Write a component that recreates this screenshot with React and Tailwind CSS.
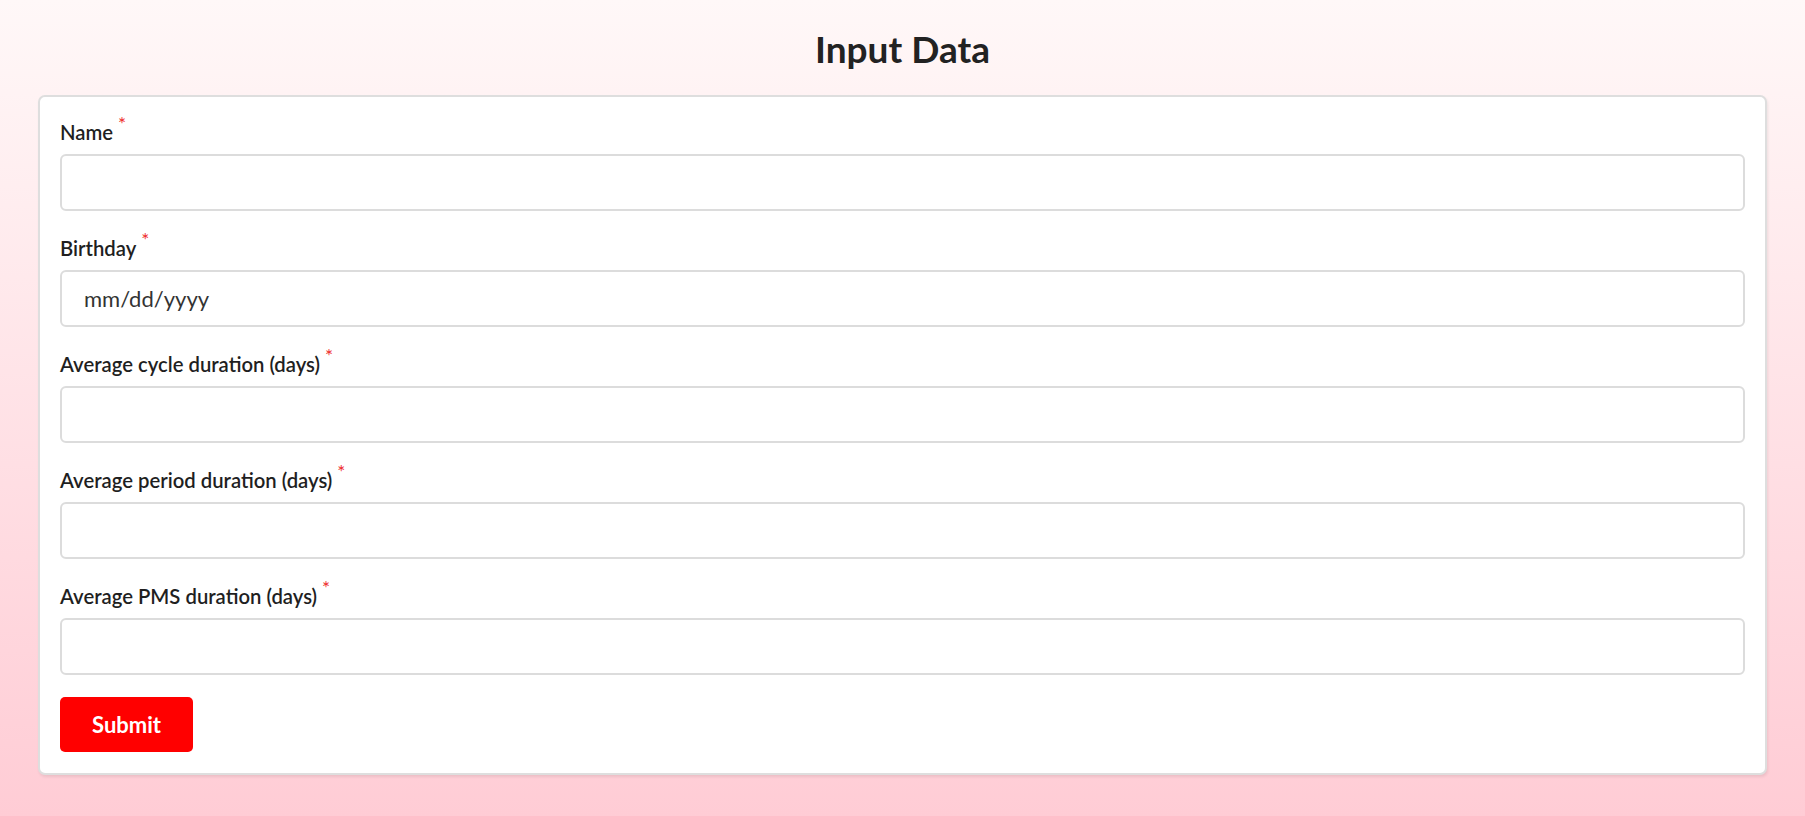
import React from "react";

const fields = [
  { label: "Name", placeholder: "" },
  { label: "Birthday", placeholder: "mm/dd/yyyy" },
  { label: "Average cycle duration (days)", placeholder: "" },
  { label: "Average period duration (days)", placeholder: "" },
  { label: "Average PMS duration (days)", placeholder: "" },
];

export default function App() {
  return (
    <div
      className="min-h-[816px] w-full bg-gradient-to-b from-[#fff8f8] to-[#ffccd5] px-[38px] pt-[27px] pb-[40px] text-[#222]"
      style={{ fontFamily: "Lato, 'Open Sans', sans-serif" }}
    >
      <h1 className="mb-[25px] text-center text-[37px] font-bold leading-[43px] text-[#222]">
        Input Data
      </h1>
      <form
        className="rounded-[7px] border-2 border-[#dedede] bg-white px-5 pt-[23px] pb-[21px] shadow-[1px_2px_3px_rgba(0,0,0,0.08)]"
        onSubmit={(e) => e.preventDefault()}
      >
        {fields.map((f) => (
          <div key={f.label} className="mb-[25px] flex flex-col">
            <label className="mb-[10px] text-[20.3px] font-semibold leading-[24px] text-[#1f1f1f]">
              {f.label}
              <sup className="ml-[5px] text-[19px] font-normal text-[#ee2b2b]">*</sup>
            </label>
            <input
              type="text"
              placeholder={f.placeholder}
              className="h-[57px] w-full rounded-[6px] border-2 border-[#dcdcdc] bg-white pl-[22px] text-[22px] text-[#333] outline-none placeholder:text-[#333]"
            />
          </div>
        ))}
        <button
          type="submit"
          className="-mt-[3px] h-[55px] w-[133px] rounded-[5px] bg-[#ff0000] text-[22px] font-bold text-white"
        >
          Submit
        </button>
      </form>
    </div>
  );
}
